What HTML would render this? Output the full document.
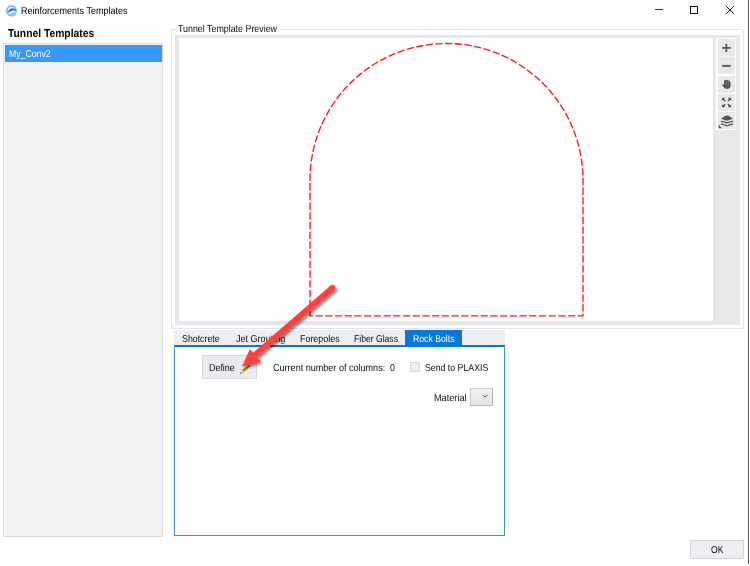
<!DOCTYPE html>
<html><head><meta charset="utf-8">
<style>
html,body{margin:0;padding:0;width:750px;height:566px;overflow:hidden;background:#fff;}
body{position:relative;font-family:"Liberation Sans",sans-serif;color:#000;}
.a{position:absolute;}
.t{position:absolute;white-space:nowrap;font-size:10px;line-height:10px;color:#0c0c0c;transform-origin:0 0;text-rendering:geometricPrecision;}
</style></head><body>
<!-- title bar -->
<svg class="a" style="left:4px;top:3px" width="16" height="16" viewBox="0 0 16 16">
  <circle cx="7.5" cy="7.8" r="5.7" fill="none" stroke="#a9d6f7" stroke-width="1.2" stroke-dasharray="1.2 1.1"/>
  <circle cx="7.5" cy="7.8" r="4.5" fill="none" stroke="#6db7f0" stroke-width="1.4"/>
  <path d="M3.6 10 Q4.5 5.3 8.6 5.2 Q11.8 5.4 12.3 8.2 Q9.5 6.8 6.8 8.6 Q5 9.6 3.6 10 Z" fill="#1c84e0"/>
  <path d="M5.8 11.2 Q8.5 8.6 12.4 9 L11.8 12 Q9.5 13.6 7 12.8 Z" fill="#8cc6f4"/>
</svg>
<div class="t" id="title" style="left:20.5px;top:7px;color:#000;transform:scaleX(0.901)">Reinforcements Templates</div>
<div class="a" style="left:655px;top:9px;width:8px;height:1px;background:#333"></div>
<div class="a" style="left:690px;top:6px;width:6px;height:6px;border:1px solid #111"></div>
<svg class="a" style="left:725px;top:5px" width="10" height="10" viewBox="0 0 10 10">
  <path d="M1 1 L9 9 M9 1 L1 9" stroke="#222" stroke-width="1"/>
</svg>
<div class="a" style="left:748px;top:0;width:1px;height:564px;background:#5f5a5a"></div>

<!-- left panel -->
<div class="t" id="tt" style="left:8px;top:29px;font-size:11.5px;font-weight:bold;color:#000;transform:scaleX(0.897)">Tunnel Templates</div>
<div class="a" style="left:3px;top:43px;width:158px;height:492px;border:1px solid #dcdce2;background:#f2f2f2"></div>
<div class="a" style="left:5px;top:45px;width:157px;height:17px;background:#3899fa"></div>
<div class="t" id="myconv" style="left:8.6px;top:50px;color:#fff;transform:scaleX(0.87)">My_Conv2</div>

<!-- group box -->
<div class="a" style="left:171px;top:29px;width:571px;height:298px;border:1px solid #dde6ee;border-radius:2px"></div>
<div class="a" style="left:176px;top:25px;width:104px;height:8px;background:#fff"></div>
<div class="t" id="gbt" style="left:178px;top:25px;transform:scaleX(0.886)">Tunnel Template Preview</div>
<div class="a" style="left:175px;top:35px;width:565px;height:290px;background:#e7e7e7"></div>
<div class="a" style="left:179px;top:38px;width:534px;height:283px;background:#fff"></div>
<!-- toolbar -->
<div class="a" style="left:716px;top:38px;width:20px;height:92px;background:#fff"></div>
<div class="a" style="left:718px;top:39px;width:17px;height:35px;background:#e8e8e8"></div>
<div class="a" style="left:718px;top:56px;width:17px;height:1px;background:#f0f0f0"></div>
<div class="a" style="left:718px;top:76px;width:17px;height:17px;background:#e8e8e8"></div>
<div class="a" style="left:718px;top:94px;width:17px;height:17px;background:#e8e8e8"></div>
<div class="a" style="left:718px;top:112px;width:17px;height:17px;background:#e8e8e8"></div>
<svg class="a" style="left:717px;top:40px" width="19" height="90" viewBox="0 0 19 90">
  <path d="M5.2 7.8 H13.7 M9.3 3.7 V11.9" stroke="#585858" stroke-width="1.8"/>
  <path d="M5.2 25.9 H13.7" stroke="#585858" stroke-width="1.9"/>
  <g transform="translate(0,36)">
    <path d="M7 5 Q7 4 8 4 Q8.6 3.7 9.2 4.2 Q9.8 3.6 10.5 3.8 Q11.2 3.9 11.3 4.6 Q12.2 4.4 12.6 5.2 Q13.6 5.3 13.6 6.4 L13.6 10.3 Q13.3 12.8 10.6 12.8 L9.3 12.8 Q7.6 12.8 6.9 11.5 L5.1 9.3 Q4.7 8.3 5.8 8.3 L7 9.1 Z" fill="#5a5a5a"/>
    <path d="M9.2 4.5 V8 M11.3 4.8 V8" stroke="#8a8a8a" stroke-width="0.6"/>
  </g>
  <g transform="translate(0,54)" stroke="#444" stroke-width="1.2" fill="#444">
    <path d="M6 4.8 L8.2 7.4 M13 4.8 L10.8 7.4 M6 12.2 L8.2 10.2 M13 12.2 L10.8 10.2" fill="none"/>
    <path d="M5.3 4 H7.6 L5.3 6.3 Z M13.7 4 H11.4 L13.7 6.3 Z M5.3 13 H7.6 L5.3 10.7 Z M13.7 13 H11.4 L13.7 10.7 Z" stroke-width="0.5"/>
  </g>
  <g transform="translate(0,72)" fill="#555">
    <path d="M3.9 6.4 Q6.5 5.2 8 4 Q10 2.8 12 4 Q13.5 5.2 16.1 6.4 Q13 7.6 10 8.8 Q7 7.6 3.9 6.4 Z"/>
    <path d="M3.9 9.3 Q7 9.5 10 10.9 Q13 9.5 16.1 9.3 M3.9 12.1 Q7 12.3 10 14 Q13 12.3 16.1 12.1" fill="none" stroke="#555" stroke-width="1.2"/>
    <path d="M1.6 12.8 L1.6 16.2 L5 16.2 Z"/>
  </g>
</svg>

<!-- tunnel shape -->
<svg class="a" style="left:0;top:0" width="750" height="566" viewBox="0 0 750 566">
  <path d="M310 315.8 H583 V180 A136.5 136.5 0 0 0 310 180 Z" fill="none" stroke="#ff1414" stroke-width="1.35" stroke-dasharray="7.3 2.41" stroke-dashoffset="4.2"/>
</svg>

<!-- tabs -->
<div class="a" style="left:174px;top:330px;width:331px;height:16px;background:#ededf2"></div>
<div class="a" style="left:405px;top:330px;width:57px;height:16px;background:#0a78d6"></div>
<div class="t" id="tab1" style="left:182px;top:335px;transform:scaleX(0.881)">Shotcrete</div>
<div class="t" id="tab2" style="left:235.5px;top:335px;transform:scaleX(0.904)">Jet Grouting</div>
<div class="t" id="tab3" style="left:300px;top:335px;transform:scaleX(0.89)">Forepoles</div>
<div class="t" id="tab4" style="left:354px;top:335px;transform:scaleX(0.86)">Fiber Glass</div>
<div class="t" id="tab5" style="left:413px;top:335px;color:#fff;transform:scaleX(0.868)">Rock Bolts</div>
<div class="a" style="left:174px;top:345px;width:329px;height:188px;border:1px solid #3c8fdb;border-top:2px solid #0a78d6"></div>

<!-- panel content -->
<div class="a" style="left:202px;top:355px;width:53px;height:22px;border:1px solid #d6d6de;background:#eaeaf0"></div>
<div class="t" id="define" style="left:209px;top:364px;transform:scaleX(0.89)">Define</div>
<svg class="a" style="left:238px;top:362px" width="14" height="14" viewBox="0 0 14 14">
  <path d="M2 12 L4 8 L11 2 L13 4 L6 10 Z" fill="#c98a12"/>
  <path d="M2 12 L4 8 L6 10 Z" fill="#e8c9a0"/>
  <path d="M2 12 L2.8 10.5 L3.5 11.2 Z" fill="#333"/>
</svg>
<div class="t" id="cur" style="left:272.5px;top:364px;transform:scaleX(0.905)">Current number of columns:</div>
<div class="t" id="zero" style="left:390px;top:364px;transform:scaleX(0.89)">0</div>
<div class="a" style="left:410px;top:362px;width:8px;height:8px;border:1px solid #d8d8e0;background:#ededf2"></div>
<div class="t" id="send" style="left:425px;top:364px;transform:scaleX(0.875)">Send to PLAXIS</div>
<div class="t" id="mat" style="left:433.8px;top:394px;transform:scaleX(0.915)">Material</div>
<div class="a" style="left:470px;top:388px;width:21px;height:16px;border:1px solid #cacaca;border-right-color:#b4b4b4;border-bottom-color:#b8b8b8;background:linear-gradient(#f0f0f0,#e4e4e4)"></div>
<svg class="a" style="left:482px;top:394px" width="7" height="5" viewBox="0 0 7 5">
  <path d="M0.7 1 L3 3 L5.5 1" stroke="#4a4a4a" stroke-width="0.95" fill="none"/>
</svg>

<!-- OK -->
<div class="a" style="left:690px;top:540px;width:52px;height:17px;border:1px solid #d3d3dc;background:#ededf2"></div>
<div class="t" id="ok" style="left:711px;top:546px;transform:scaleX(0.86)">OK</div>

<!-- arrow -->
<svg class="a" style="left:0;top:0" width="750" height="566" viewBox="0 0 750 566">
  <defs><filter id="sh" x="-20%" y="-20%" width="140%" height="140%"><feDropShadow dx="2" dy="2" stdDeviation="1.8" flood-color="#000" flood-opacity="0.5"/></filter></defs>
  <g filter="url(#sh)">
    <path d="M332.3 288 L254.5 355.5" stroke="#ff4141" stroke-width="6" stroke-linecap="round"/>
    <path d="M242.1 366.4 L249.8 349.1 L260.8 361.5 Z" fill="#ff4141"/>
  </g>
</svg>
</body></html>
